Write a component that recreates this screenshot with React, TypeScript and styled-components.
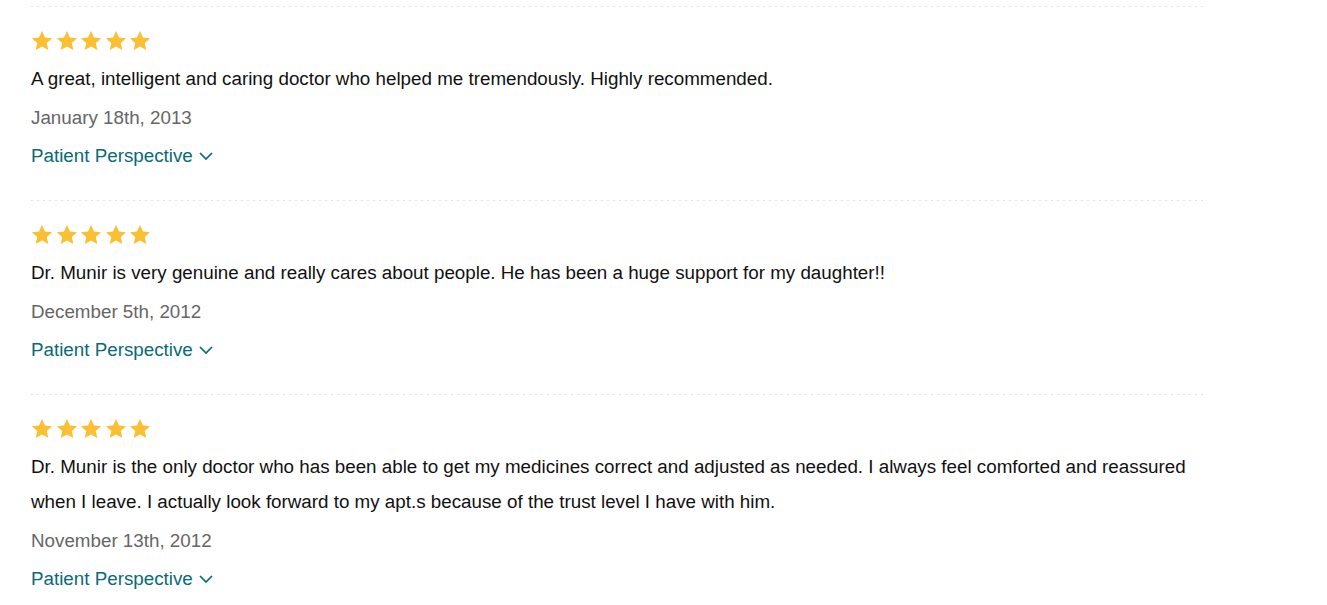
import React from "react";
import styled, { createGlobalStyle } from "styled-components";

const Global = createGlobalStyle`
  html, body { margin: 0; padding: 0; background: #fff; }
  body { font-family: Arial, "Liberation Sans", sans-serif; }
`;

const List = styled.div`
  width: 1175px;
  padding: 6px 0 0 31px;
`;

const Review = styled.div`
  padding: 20px 0 26px;
  background-image: repeating-linear-gradient(to right, #e2e2e2 0 2px, transparent 2px 6px);
  background-size: 100% 1px;
  background-repeat: no-repeat;
  background-position: top left;
`;

const Stars = styled.div`
  display: flex;
  gap: 2.5px;
  height: 24px;
  align-items: center;
  margin-top: 3px;
`;

const Body = styled.p`
  margin: 8px 0 0;
  font-size: 18.8px;
  line-height: 35px;
  color: #111;
`;

const DateLine = styled.div`
  font-size: 18.8px;
  line-height: 39px;
  color: #666;
  margin-top: 2px;
`;

const Link = styled.a`
  display: inline-flex;
  align-items: center;
  gap: 6px;
  font-size: 18.8px;
  line-height: 37px;
  color: #086b75;
  text-decoration: none;
  cursor: pointer;
`;

const Star = () => (
  <svg width="22" height="22" viewBox="0 0 24 24">
    <path
      fill="#fbbf33"
      d="M12 1.2l3.3 7.1 7.7.8-5.8 5.2 1.7 7.6L12 18l-6.9 3.9 1.7-7.6L1 9.1l7.7-.8z"
    />
  </svg>
);

const Chevron = () => (
  <svg width="14" height="8" viewBox="0 0 14 8">
    <path d="M1 1l6 6 6-6" fill="none" stroke="#086b75" strokeWidth="1.7" />
  </svg>
);

const reviews = [
  {
    text: "A great, intelligent and caring doctor who helped me tremendously. Highly recommended.",
    date: "January 18th, 2013",
  },
  {
    text: "Dr. Munir is very genuine and really cares about people. He has been a huge support for my daughter!!",
    date: "December 5th, 2012",
  },
  {
    text: "Dr. Munir is the only doctor who has been able to get my medicines correct and adjusted as needed. I always feel comforted and reassured when I leave. I actually look forward to my apt.s because of the trust level I have with him.",
    date: "November 13th, 2012",
  },
];

export default function App() {
  return (
    <>
      <Global />
      <List>
        {reviews.map((r, i) => (
          <Review key={i}>
            <Stars>
              {[0, 1, 2, 3, 4].map((s) => (
                <Star key={s} />
              ))}
            </Stars>
            <Body>{r.text}</Body>
            <DateLine>{r.date}</DateLine>
            <Link>
              Patient Perspective
              <Chevron />
            </Link>
          </Review>
        ))}
      </List>
    </>
  );
}
